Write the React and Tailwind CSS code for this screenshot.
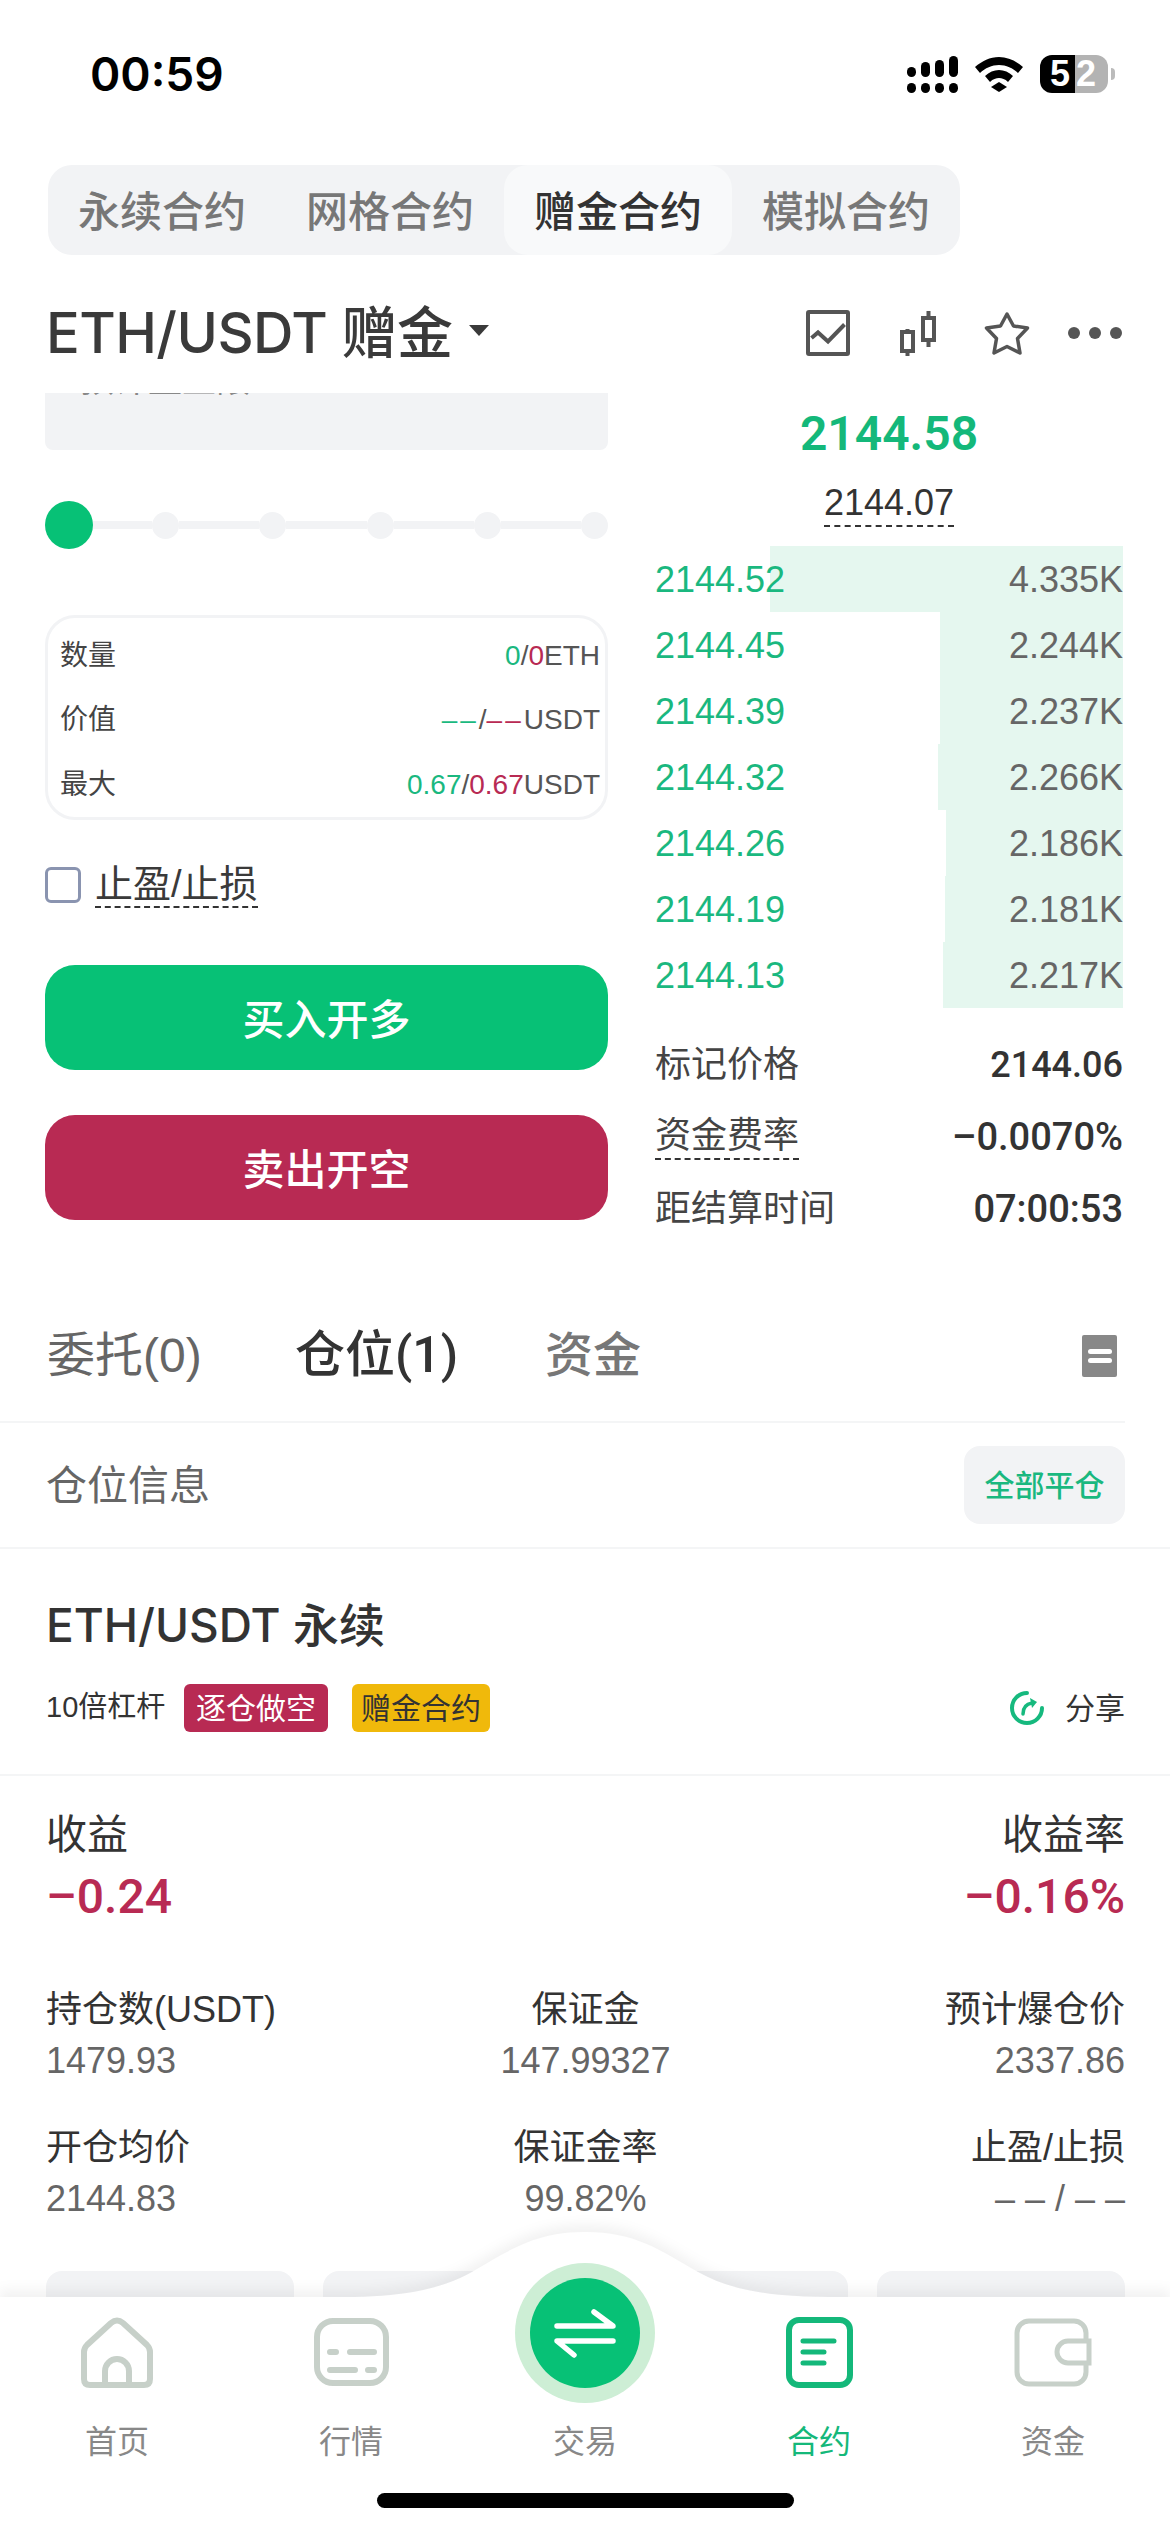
const tabs = ['永续合约', '网格合约', '赠金合约', '模拟合约'];

const book = [
  ['2144.52', '4.335K', 353],
  ['2144.45', '2.244K', 183],
  ['2144.39', '2.237K', 183],
  ['2144.32', '2.266K', 185],
  ['2144.26', '2.186K', 177],
  ['2144.19', '2.181K', 178],
  ['2144.13', '2.217K', 180],
];

const details = [
  [['持仓数(USDT)', '1479.93'], ['保证金', '147.99327'], ['预计爆仓价', '2337.86']],
  [['开仓均价', '2144.83'], ['保证金率', '99.82%'], ['止盈/止损', '– – / – –']],
];

function SignalIcon() {
  return (
    <svg width="51" height="37" viewBox="0 0 51 37" className="text-black">
      <rect x="0" y="11" width="9" height="10" rx="4.5" fill="currentColor" />
      <rect x="14" y="6" width="9" height="15" rx="4.5" fill="currentColor" />
      <rect x="28" y="4" width="9" height="17" rx="4.5" fill="currentColor" />
      <rect x="42" y="0" width="9" height="21" rx="4.5" fill="currentColor" />
      <rect x="0" y="27" width="9" height="10" rx="4.5" fill="currentColor" />
      <rect x="14" y="27" width="9" height="10" rx="4.5" fill="currentColor" />
      <rect x="28" y="27" width="9" height="10" rx="4.5" fill="currentColor" />
      <rect x="42" y="27" width="9" height="10" rx="4.5" fill="currentColor" />
    </svg>
  );
}

function WifiIcon() {
  return (
    <svg width="48" height="35" viewBox="0 0 48 35" fill="#000">
      <path d="M24 0C33 0 41 4 48 10L43 16C38 11 31 8 24 8C17 8 10 11 5 16L0 10C7 4 15 0 24 0Z" />
      <path d="M24 13C29 13 34 15 38 19L33 25C30 22 27 21 24 21C21 21 18 22 15 25L10 19C14 15 19 13 24 13Z" />
      <path d="M24 25L32 30L24 35L16 30Z" />
    </svg>
  );
}

function ChartIcon() {
  return (
    <svg width="44" height="46" viewBox="0 0 44 46" fill="none" stroke="#555" strokeWidth="4">
      <rect x="2" y="2" width="40" height="42" rx="1" />
      <path d="M5.5 28L12 22.5L22 31.5L38.5 14.5" />
    </svg>
  );
}

function CandleIcon() {
  return (
    <svg width="36" height="45" viewBox="0 0 36 45" fill="none" stroke="#555" strokeWidth="4">
      <rect x="2" y="21" width="11" height="19" />
      <path d="M7.5 18V21M7.5 40V45" />
      <rect x="23" y="7" width="11" height="22" />
      <path d="M28.5 0V7M28.5 29V36" />
    </svg>
  );
}

function StarIcon() {
  return (
    <svg width="46" height="44" viewBox="0 0 46 44" fill="none" stroke="#555" strokeWidth="3.5" strokeLinejoin="round">
      <path d="M23 3L29.5 15L43.5 17L33.5 27.5L36 42L23 35.5L10 42L12.5 27.5L2.5 17L16.5 15Z" />
    </svg>
  );
}

function ShareIcon() {
  return (
    <svg width="36" height="36" viewBox="0 0 36 36" fill="none" stroke="#16b97e" strokeWidth="4" strokeLinecap="round">
      <path d="M18 3A15 15 0 1 0 33 18" />
      <path d="M14 24C14 18 17 14 23 13" strokeWidth="3.5" />
      <path d="M21 8L28 12L23 18Z" fill="#16b97e" stroke="none" />
    </svg>
  );
}

function HomeIcon() {
  return (
    <svg width="72" height="71" viewBox="0 0 72 71" fill="none" stroke="#c7d0c9" strokeWidth="6">
      <path d="M30 6Q36 1 42 6L66 28Q69 31 69 35V62Q69 68 63 68H9Q3 68 3 62V35Q3 31 6 28Z" />
      <path d="M24 68V54A12 12 0 0 1 48 54V68" />
    </svg>
  );
}

function MarketIcon() {
  return (
    <svg width="75" height="68" viewBox="0 0 75 68" fill="none" stroke="#c7d0c9" strokeWidth="6" strokeLinecap="round">
      <rect x="3" y="3" width="69" height="62" rx="16" />
      <path d="M16 34H22M36 34H60M16 52H41M54 52H60" />
    </svg>
  );
}

function ContractIcon() {
  return (
    <svg width="67" height="71" viewBox="0 0 67 71" fill="none" stroke="#14b87a" strokeLinecap="round">
      <rect x="3" y="3" width="61" height="65" rx="10" strokeWidth="6" />
      <path d="M17 24H48M17 35H38M17 46H38" strokeWidth="5" />
    </svg>
  );
}

function WalletIcon() {
  return (
    <svg width="78" height="69" viewBox="0 0 78 69" fill="none" stroke="#c7d0c9" strokeWidth="5">
      <rect x="3" y="3" width="69" height="63" rx="12" />
      <path d="M75 23H54A11 11 0 0 0 54 45H75Z" fill="#fff" />
    </svg>
  );
}

function NavItem({ label, active, children }) {
  return (
    <div className="flex w-[234px] flex-col items-center">
      <div className="flex h-[72px] items-center justify-center">{children}</div>
      <div className={`mt-[34px] h-[40px] text-[32px] leading-[40px] ${active ? 'text-[#14b87a]' : 'text-[#888]'}`}>{label}</div>
    </div>
  );
}

export default function App() {
  return (
    <div className="relative h-[2532px] w-[1170px] overflow-hidden bg-white font-['Liberation_Sans','Noto_Sans_CJK_SC',sans-serif] text-[#333]">
      {/* status bar */}
      <div className="flex h-[165px] items-start pt-[46px] pl-[90px] pr-[55px]">
        <div className="font-['Inter'] text-[46px] leading-[56px] font-semibold text-black">00:59</div>
        <div className="ml-auto flex h-[56px] items-center">
          <SignalIcon />
          <div className="ml-[17px]"><WifiIcon /></div>
          <div className="ml-[17px] flex h-[38px] w-[68px] overflow-hidden rounded-[12px] text-[36px] leading-[38px] font-bold text-white">
            <div className="w-[35px] bg-black pr-[5px] text-right">5</div>
            <div className="w-[33px] bg-[#b3b3b3] pl-[1px]">2</div>
          </div>
          <div className="ml-[3px] h-[12px] w-[4px] rounded-r bg-[#bbb]" />
        </div>
      </div>

      {/* contract type tabs */}
      <div className="ml-[48px] flex h-[90px] w-[912px] rounded-[24px] bg-[#f2f3f5]">
        {tabs.map((t, i) => (
          <div
            key={t}
            className={`flex w-[228px] items-center justify-center rounded-[24px] pt-[5px] text-[42px] font-medium ${i === 2 ? 'bg-[#f8f9fa] text-[#333]' : 'text-[#777]'}`}
          >
            {t}
          </div>
        ))}
      </div>

      {/* title row */}
      <div className="mt-[35px] flex h-[86px] items-center pl-[46px] pr-[48px]">
        <div className="font-['Inter','Noto_Sans_CJK_SC'] text-[56px] font-medium tracking-[-0.01em] text-[#3a3a3a]">ETH/USDT 赠金</div>
        <svg width="20" height="11" viewBox="0 0 20 11" className="ml-[17px] mt-[-6px]" fill="#3a3a3a">
          <path d="M0 0H20L10 11Z" />
        </svg>
        <div className="ml-auto flex items-center">
          <ChartIcon />
          <div className="ml-[50px]"><CandleIcon /></div>
          <div className="ml-[48px]"><StarIcon /></div>
          <div className="ml-[38px] flex gap-[9px]">
            <div className="size-[12px] rounded-full bg-[#555]" />
            <div className="size-[12px] rounded-full bg-[#555]" />
            <div className="size-[12px] rounded-full bg-[#555]" />
          </div>
        </div>
      </div>

      {/* order form + order book */}
      <div className="mt-[17px] flex h-[897px] pl-[45px]">
        <div className="w-[563px]">
          <div className="h-[57px] overflow-hidden rounded-b-lg bg-[#f2f3f5] pl-[35px]">
            <div className="mt-[-31px] text-[34px] leading-[36px] text-[#888]">预计量上限</div>
          </div>

          <div className="mt-[51px] flex h-[48px] items-center">
            <div className="size-[48px] rounded-[24px] bg-[#07c176]" />
            <div className="h-[8px] w-[59px] bg-[#f2f3f5]" />
            {[0, 1, 2, 3].map((i) => (
              <div key={i} className="flex flex-1 items-center">
                <div className="size-[27px] rounded-full bg-[#f2f3f5]" />
                <div className="h-[8px] flex-1 bg-[#f2f3f5]" />
              </div>
            ))}
            <div className="size-[27px] rounded-full bg-[#f2f3f5]" />
          </div>

          <div className="mt-[66px] flex h-[205px] flex-col justify-center rounded-[30px] border-[3px] border-[#f2f3f5] pl-[12px] pr-[5px] pt-[6px] text-[28px] text-[#555]">
            <div className="flex h-[65px] items-center justify-between">
              <span className="text-[#444]">数量</span>
              <span><span className="text-[#1ab87f]">0</span>/<span className="text-[#b82a53]">0</span>ETH</span>
            </div>
            <div className="flex h-[65px] items-center justify-between">
              <span className="text-[#444]">价值</span>
              <span><span className="tracking-[3px] text-[#1ab87f]">––</span>/<span className="tracking-[3px] text-[#b82a53]">––</span>USDT</span>
            </div>
            <div className="flex h-[65px] items-center justify-between">
              <span className="text-[#444]">最大</span>
              <span><span className="text-[#1ab87f]">0.67</span>/<span className="text-[#b82a53]">0.67</span>USDT</span>
            </div>
          </div>

          <div className="mt-[43px] flex h-[44px] items-center">
            <div className="size-[36px] rounded-[6px] border-[3px] border-[#8a94b0]" />
            <div className="ml-[14px] border-b-2 border-dashed border-[#333] text-[38px] leading-[44px] text-[#3a3a3a]">止盈/止损</div>
          </div>

          <div className="mt-[58px] flex h-[105px] items-center justify-center rounded-[30px] bg-[#07c176] pt-[5px] text-[42px] font-medium text-white">买入开多</div>
          <div className="mt-[45px] flex h-[105px] items-center justify-center rounded-[30px] bg-[#b82a53] pt-[5px] text-[42px] font-medium text-white">卖出开空</div>
        </div>

        <div className="ml-[47px] w-[468px]">
          <div className="flex h-[82px] items-center justify-center font-['Roboto'] text-[48px] font-semibold text-[#14b87a]">2144.58</div>
          <div className="flex h-[71px] justify-center pt-[7px]">
            <div className="h-[45px] border-b-2 border-dashed border-[#333] text-[36px] leading-[42px] text-[#333]">2144.07</div>
          </div>
          {book.map(([price, size, w]) => (
            <div key={price} className="relative flex h-[66px] items-center justify-between pt-[2px] text-[36px]">
              <div className="absolute inset-y-0 right-0 bg-[#e5f7ef]" style={{ width: w }} />
              <span className="relative text-[#1ab87f]">{price}</span>
              <span className="relative text-[#666]">{size}</span>
            </div>
          ))}
          <div className="mt-[21px] flex h-[72px] items-center justify-between text-[36px]">
            <span className="text-[#444]">标记价格</span>
            <span className="font-['Roboto'] font-medium text-[#333]">2144.06</span>
          </div>
          <div className="flex h-[72px] items-center justify-between text-[36px]">
            <span className="border-b-2 border-dashed border-[#333] leading-[44px] text-[#444]">资金费率</span>
            <span className="font-['Roboto'] text-[38px] font-medium text-[#333]">–0.0070%</span>
          </div>
          <div className="flex h-[72px] items-center justify-between text-[36px]">
            <span className="text-[#444]">距结算时间</span>
            <span className="font-['Roboto'] text-[38px] font-medium text-[#333]">07:00:53</span>
          </div>
        </div>
      </div>

      {/* positions tabs */}
      <div className="flex h-[133px] w-[1125px] items-center border-b-2 border-[#f4f5f6] pl-[47px]">
        <div className="w-[248px] text-[48px] text-[#666]">委托(0)</div>
        <div className="w-[250px] font-['Roboto','Noto_Sans_CJK_SC'] text-[50px] font-medium text-[#333]">仓位(1)</div>
        <div className="text-[48px] font-medium text-[#777]">资金</div>
        <div className="ml-auto mr-[8px] flex h-[42px] w-[35px] flex-col items-center justify-center gap-[4px] rounded-[2px] bg-[#888]">
          <div className="h-[5px] w-[24px] rounded-full bg-white" />
          <div className="h-[5px] w-[24px] rounded-full bg-white" />
        </div>
      </div>
      <div className="flex h-[126px] items-center justify-between border-b-2 border-[#f4f5f6] pl-[46px] pr-[45px]">
        <div className="pt-[3px] text-[41px] text-[#666]">仓位信息</div>
        <div className="flex h-[78px] w-[161px] items-center justify-center rounded-[16px] bg-[#f2f3f5] text-[30px] font-medium text-[#1ab87f]">全部平仓</div>
      </div>

      {/* position card */}
      <div className="border-b-2 border-[#f4f5f6] pl-[46px] pr-[45px] pt-[46px] pb-[42px]">
        <div className="h-[60px] font-['Inter','Noto_Sans_CJK_SC'] text-[46px] leading-[60px] font-medium text-[#333]">ETH/USDT 永续</div>
        <div className="mt-[29px] flex h-[48px] items-center">
          <div className="w-[138px] text-[29px] text-[#333]">10倍杠杆</div>
          <div className="flex h-[48px] w-[144px] items-center justify-center rounded-[6px] bg-[#b82a53] text-[30px] text-white">逐仓做空</div>
          <div className="ml-[24px] flex h-[48px] w-[138px] items-center justify-center rounded-[6px] bg-[#f0b90b] text-[30px] text-[#333]">赠金合约</div>
          <div className="ml-auto"><ShareIcon /></div>
          <div className="ml-[20px] text-[30px] text-[#333]">分享</div>
        </div>
      </div>

      <div className="pl-[46px] pr-[45px] pt-[34px]">
        <div className="flex justify-between">
          <div>
            <div className="h-[50px] text-[41px] leading-[50px] text-[#333]">收益</div>
            <div className="mt-[10px] h-[54px] font-['Roboto'] text-[48px] leading-[54px] font-medium text-[#b82a53]">–0.24</div>
          </div>
          <div className="text-right">
            <div className="h-[50px] text-[41px] leading-[50px] text-[#333]">收益率</div>
            <div className="mt-[10px] h-[54px] font-['Roboto'] text-[48px] leading-[54px] font-medium text-[#b82a53]">–0.16%</div>
          </div>
        </div>
        <div className="mt-[64px] flex flex-col gap-[43px]">
          {details.map((row) => (
            <div key={row[0][0]} className="grid grid-cols-3">
              {row.map(([label, value], i) => (
                <div key={label} className={i === 0 ? 'text-left' : i === 1 ? 'text-center' : 'text-right'}>
                  <div className="h-[44px] text-[36px] leading-[44px] text-[#333]">{label}</div>
                  <div className="mt-[7px] h-[44px] text-[36px] leading-[44px] text-[#666]">{value}</div>
                </div>
              ))}
            </div>
          ))}
        </div>
        <div className="mt-[50px] flex justify-between">
          <div className="h-[60px] w-[248px] rounded-t-[16px] bg-[#f2f3f5]" />
          <div className="h-[60px] w-[248px] rounded-t-[16px] bg-[#f2f3f5]" />
          <div className="h-[60px] w-[248px] rounded-t-[16px] bg-[#f2f3f5]" />
          <div className="h-[60px] w-[248px] rounded-t-[16px] bg-[#f2f3f5]" />
        </div>
      </div>

      {/* bottom nav */}
      <div className="absolute inset-x-0 top-[2232px] h-[300px]">
        <svg width="1170" height="300" viewBox="0 0 1170 300" className="absolute inset-0 drop-shadow-[0_-7px_6px_rgba(0,0,0,0.05)]" fill="#fff">
          <path d="M0 65H345C400 65 440 58 472 40C510 18 535 0 585 0C635 0 660 18 698 40C730 58 770 65 828 65H1170V300H0Z" />
        </svg>
        <div className="relative flex pt-[84px]">
          <NavItem label="首页"><HomeIcon /></NavItem>
          <NavItem label="行情"><MarketIcon /></NavItem>
          <NavItem label="交易" />
          <NavItem label="合约" active><ContractIcon /></NavItem>
          <NavItem label="资金"><WalletIcon /></NavItem>
        </div>
        <div className="absolute left-[515px] top-[31px] flex size-[140px] items-center justify-center rounded-full bg-[#cdeed5]">
          <div className="size-[110px] rounded-full bg-[#07c176]" />
          <svg width="140" height="140" viewBox="0 0 140 140" className="absolute inset-0" fill="none" stroke="#fff" strokeWidth="5.5" strokeLinecap="round" strokeLinejoin="round">
            <path d="M42 63H98L79 49" />
            <path d="M98 78H42L59 92" />
          </svg>
        </div>
        <div className="absolute left-[377px] top-[261px] h-[15px] w-[417px] rounded-full bg-black" />
      </div>
    </div>
  );
}
